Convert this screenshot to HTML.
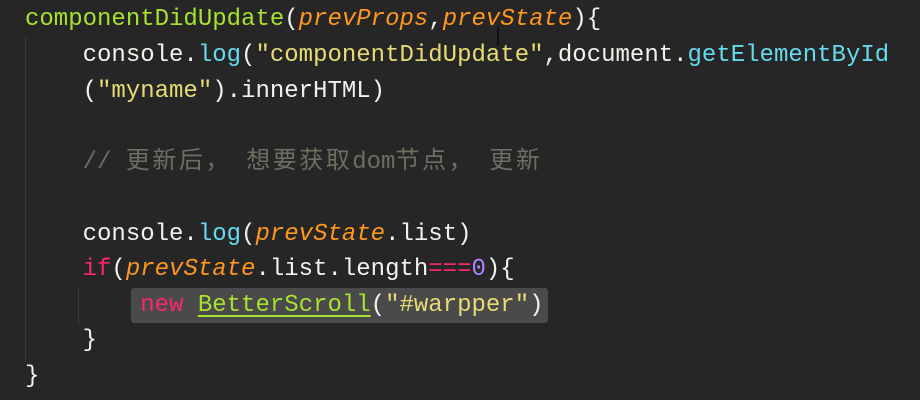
<!DOCTYPE html>
<html><head><meta charset="utf-8"><style>
body{margin:0;width:920px;height:400px;background:#262626;overflow:hidden;position:relative;}
.l{position:absolute;left:25px;font-family:"Liberation Mono","Noto Sans CJK SC",monospace;font-size:24px;line-height:36px;white-space:pre;color:#f2f2ec;}
.g{color:#a6e22e}.o{color:#fd971f;font-style:italic}.c{color:#66d9ef}.y{color:#e6db74}.p{color:#f92672}.v{color:#ae81ff}.m{color:#6f6c62}
.k{letter-spacing:2.5px}
.guide{position:absolute;width:1px;background:#3c3c3c;}
</style></head><body>
<div class="guide" style="left:25px;top:38px;height:324px"></div>
<div class="guide" style="left:78px;top:288px;height:36px"></div>
<div style="position:absolute;left:131px;top:288px;width:417px;height:35px;background:#4a4a4a;border-radius:3px"></div>
<div class="l" style="top:2px"><span class="g">componentDidUpdate</span>(<span class="o">prevProps</span>,<span class="o">prevState</span>){</div>
<div class="l" style="top:38px">    console.<span class="c">log</span>(<span class="y">"componentDidUpdate"</span>,document.<span class="c">getElementById</span></div>
<div class="l" style="top:74px">    (<span class="y">"myname"</span>).innerHTML)</div>
<div class="l m" style="top:145px">    // <span class="k">更新后，</span> <span class="k">想要获取</span>dom<span class="k">节点，</span> <span class="k">更新</span></div>
<div class="l" style="top:217px">    console.<span class="c">log</span>(<span class="o">prevState</span>.list)</div>
<div class="l" style="top:252px">    <span class="p">if</span>(<span class="o">prevState</span>.list.length<span class="p">===</span><span class="v">0</span>){</div>
<div class="l" style="top:288px">        <span class="p">new</span> <span class="g" style="text-decoration:underline;text-underline-offset:4px">BetterScroll</span>(<span class="y">"#warpper"</span>)</div>
<div class="l" style="top:323px">    }</div>
<div class="l" style="top:359px">}</div>
<div style="position:absolute;left:497px;top:26px;width:2px;height:20px;background:#111"></div>
</body></html>
